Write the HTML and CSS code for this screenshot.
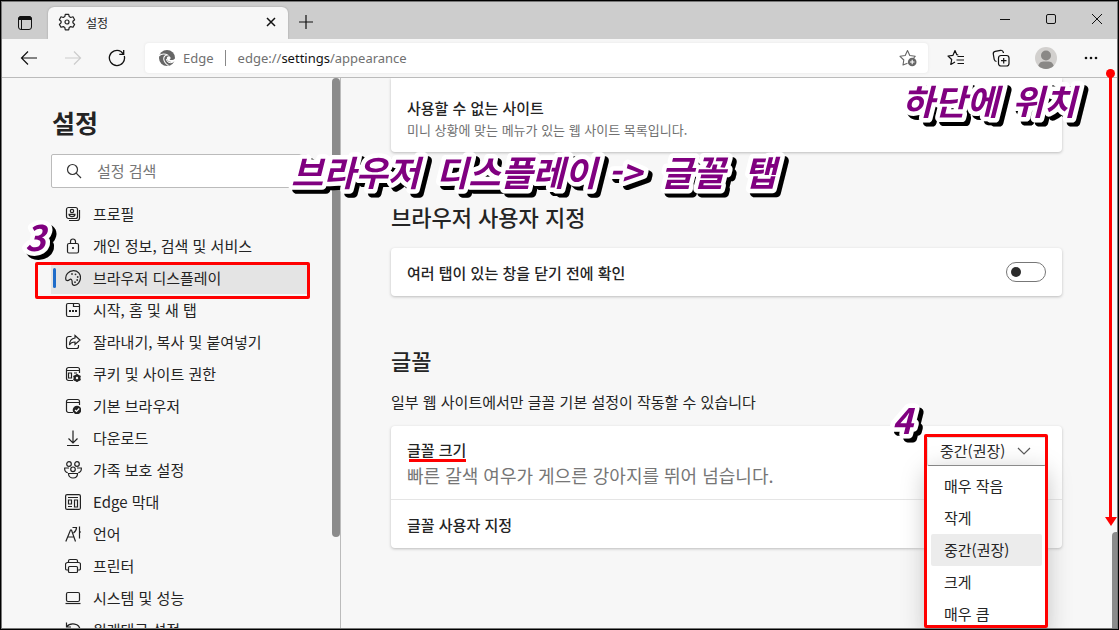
FILE: index.html
```html
<!DOCTYPE html>
<html lang="ko">
<head>
<meta charset="utf-8">
<title>설정</title>
<meta name="viewport" content="width=device-width, initial-scale=1">
<link rel="stylesheet" href="styles.css">
</head>
<body>
<div class="window">
  <header class="titlebar">
    <button class="tab-actions" aria-label="탭 작업 메뉴">
      <svg width="16" height="16" viewBox="0 0 16 16" fill="none" stroke="#111"><rect x="1.5" y="1.5" width="13" height="13" rx="2.5"/><path d="M4.5 5v9.5"/><path d="M1.5 4.5v-.5a2.5 2.5 0 0 1 2.500-2.500h8a2.500 2.500 0 0 1 2.500 2.500v.500z" fill="#111"/></svg>
    </button>
    <div class="tab">
      <svg width="18" height="18" viewBox="0 0 18 18" fill="none" stroke="#222" stroke-width="1.200" stroke-linejoin="round"><path d="M7.300 1.300h3.400l.5 2.300 1.500.9 2.300-.7 1.600 2.900-1.700 1.600v1.500l1.700 1.600-1.600 2.900-2.300-.7-1.500.9-.5 2.300H7.300l-.5-2.300-1.500-.9-2.300.7-1.600-2.900 1.700-1.600V8.300L1.400 6.700 3 3.800l2.300.7 1.500-.9z"/><circle cx="9" cy="9" r="2"/></svg>
      <span class="tab-name">설정</span>
      <button class="tab-close" aria-label="탭 닫기"><svg width="10" height="10" viewBox="0 0 10 10" stroke="#111" stroke-width="1.500"><path d="M1 1l8 8M9 1L1 9"/></svg></button>
    </div>
    <button class="new-tab" aria-label="새 탭"><svg width="16" height="16" viewBox="0 0 16 16" stroke="#111" stroke-width="1.200"><path d="M8 1v14M1 8h14"/></svg></button>
    <div class="controls">
      <button aria-label="최소화"><svg width="12" height="12" viewBox="0 0 12 12" stroke="#111"><path d="M1 6.500h10"/></svg></button>
      <button aria-label="최대화"><svg width="12" height="12" viewBox="0 0 12 12" fill="none" stroke="#111"><rect x="1.500" y="1.500" width="9" height="9" rx="1.500"/></svg></button>
      <button aria-label="닫기"><svg width="12" height="12" viewBox="0 0 12 12" stroke="#111"><path d="M1 1l10 10M11 1L1 11"/></svg></button>
    </div>
  </header>

  <div class="toolbar">
    <button class="tool" aria-label="뒤로"><svg width="18" height="16" viewBox="0 0 18 16" fill="none" stroke="#111" stroke-width="1.200"><path d="M17 8H1.500M8 1.500L1.500 8 8 14.500"/></svg></button>
    <button class="tool" aria-label="앞으로" disabled><svg width="18" height="16" viewBox="0 0 18 16" fill="none" stroke="#ccc" stroke-width="1.200"><path d="M1 8h15.500M10 1.500L16.500 8 10 14.500"/></svg></button>
    <button class="tool" aria-label="새로 고침"><svg width="18" height="18" viewBox="0 0 18 18" fill="none" stroke="#111" stroke-width="1.300"><path d="M16.300 7A7.600 7.600 0 1 1 13 2.500L15.500 5M15.700 1v4.300h-4.400"/></svg></button>
    <div class="address">
      <svg width="16" height="16" viewBox="0 0 16 16"><circle cx="8" cy="8" r="8" fill="#666"/><path d="M0 5.800C2.500 3.300 6.500 3.600 8.500 5c-2.800.2-4 2-3.700 4.500.4 2.600 2.300 4.600 4.700 6M13.800 12.300c-3 1.100-6 0-6.300-3.300" fill="none" stroke="#fff" stroke-width="1.100"/><path d="M8.300 9.800c-1.400-2.200.6-4.300 2.400-3.300 1.600 1 .8 2.600-.3 3.200 1.600.8 4.400.5 5.600-1.200l.5 2.300c-2.300 1.700-6.600 1.900-8.200-1z" fill="#fff"/></svg>
      <span class="brand">Edge</span>
      <span class="divider"></span>
      <label class="url" for="address">edge://<b>settings</b>/appearance</label>
      <input id="address" class="address-input" aria-label="주소">
      <button class="star" aria-label="즐겨찾기에 추가"><svg width="18" height="18" viewBox="0 0 18 18" fill="none" stroke="#666" stroke-width="1.100" stroke-linejoin="round"><path d="M8.500 14.200L4 16l.8-5L1 7.300l5.200-.8L8.500 1.500l2.300 5 5.400.8-1.500 1.500"/><circle cx="13.200" cy="13" r="4.300" fill="#666" stroke="none"/><path d="M13.200 10.700v4.600M10.900 13h4.600" stroke="#fff"/></svg></button>
    </div>
    <button class="tool wide" aria-label="즐겨찾기"><svg width="18" height="18" viewBox="0 0 18 18" fill="none" stroke="#111" stroke-width="1.200" stroke-linejoin="round"><path d="M11.300 6L9.800 5.700 8 1.500 6 6.300l-5 .7 3.700 3.500L3.800 15.500 8 13"/><path d="M10.500 7.500H17M9.500 11H17M10.500 14.500H17"/></svg></button>
    <button class="tool wide" aria-label="컬렉션"><svg width="18" height="18" viewBox="0 0 18 18" fill="none" stroke="#111" stroke-width="1.200"><rect x="6.500" y="6.500" width="10.500" height="10.500" rx="2.500"/><path d="M11.700 9v5.500M9 11.700h5.500M4.500 12.500c-1.500-.2-2-1-2.300-2.200L1.300 5.200C1 3.500 1.700 2.600 3.200 2.300L8.500 1.300c1.700-.3 2.500.4 2.900 2.200v.5"/></svg></button>
    <button class="tool wide" aria-label="프로필"><svg width="22" height="22" viewBox="0 0 22 22"><circle cx="11" cy="11" r="11" fill="#d2d0ce"/><circle cx="11" cy="8.500" r="5" fill="#8a8886"/><path d="M3.300 18.800C4.500 14.300 8 14.500 11 14.500s6.500-.2 7.700 4.300A11 11 0 0 1 3.300 18.800z" fill="#8a8886"/></svg></button>
    <button class="tool wide" aria-label="설정 및 기타"><svg width="14" height="4" viewBox="0 0 14 4" fill="#111"><circle cx="2" cy="2" r="1.300"/><circle cx="7" cy="2" r="1.300"/><circle cx="12" cy="2" r="1.300"/></svg></button>
  </div>

  <div class="page">
    <aside class="sidebar">
      <h1>설정</h1>
      <div class="search">
        <svg width="16" height="16" viewBox="0 0 16 16" fill="none" stroke="#333" stroke-width="1.200"><circle cx="6.500" cy="6.500" r="5"/><path d="M10.200 10.200l4.800 4.800"/></svg>
        <input type="search" placeholder="설정 검색" aria-label="설정 검색">
      </div>
      <nav>
        <a href="#profile"><svg class="icon" viewBox="0 0 16 16"><rect x="1.500" y="1.500" width="11" height="11" rx="2"/><circle cx="7" cy="5" r="1.700"/><path d="M4 8.300h6c0 3-6 3-6 0zM14.500 4v8a2.500 2.500 0 0 1-2.500 2.500H4"/></svg><span>프로필</span></a>
        <a href="#privacy"><svg class="icon" viewBox="0 0 16 16"><rect x="2.500" y="5.500" width="11" height="9.500" rx="1.500"/><path d="M5.500 5.500V3.500a2.500 2.500 0 0 1 5 0v2"/><circle cx="8" cy="10" r=".5"/></svg><span>개인 정보, 검색 및 서비스</span></a>
        <a href="#appearance" class="current" aria-current="page"><svg class="icon" viewBox="0 0 16 16"><path d="M1 10C-.5 5 4 .7 8.500.7c4.500 0 7.200 3.300 7 7.200-.2 4-3 7.500-6.200 7.400C5.500 15 8.300 11.500 6.500 9.600 4.700 7.800 4 12.200 1 10z"/><g fill="#333" stroke="none"><circle cx="7" cy="4" r=".9"/><circle cx="10.500" cy="4.300" r=".9"/><circle cx="12.700" cy="7" r=".9"/><circle cx="12.200" cy="10" r=".9"/><circle cx="10" cy="12.200" r=".9"/></g></svg><span>브라우저 디스플레이</span></a>
        <a href="#start"><svg class="icon" viewBox="0 0 16 16"><rect x="1.500" y="1.500" width="13" height="13" rx="1.500"/><path d="M8.500 1.500v3h6"/><path d="M4 9h2M7 9h2M10 9h2" stroke-width="1.800"/></svg><span>시작, 홈 및 새 탭</span></a>
        <a href="#share"><svg class="icon" viewBox="0 0 16 16"><path d="M6.500 2.500h-3a2 2 0 0 0-2 2v8a2 2 0 0 0 2 2h8a2 2 0 0 0 2-2V11M10 1.500l5 4.500-5 4.500V8C7 8 5.500 9 4.500 11c0-4 2-6.500 5.500-7z"/></svg><span>잘라내기, 복사 및 붙여넣기</span></a>
        <a href="#cookies"><svg class="icon" viewBox="0 0 16 16"><path d="M8 14.500H3.500a2 2 0 0 1-2-2v-9a2 2 0 0 1 2-2h9a2 2 0 0 1 2 2V7M1.500 4.500h13M3.500 7h3v5h-3zM9 7h3"/><circle cx="12" cy="12" r="2.500" stroke-width="2"/><path d="M12 8v8M8.500 10l7 4M15.500 10l-7 4" stroke-width="1.500"/><circle cx="12" cy="12" r="1.200" fill="#f7f7f7" stroke="none"/></svg><span>쿠키 및 사이트 권한</span></a>
        <a href="#default"><svg class="icon" viewBox="0 0 16 16"><path d="M8 14.500H3.500a2 2 0 0 1-2-2v-9a2 2 0 0 1 2-2h9a2 2 0 0 1 2 2V7M1.500 4.500h13"/><circle cx="12" cy="12" r="4.300" fill="#222" stroke="none"/><path d="M10 12l1.500 1.500 2.700-3" stroke="#fff"/></svg><span>기본 브라우저</span></a>
        <a href="#downloads"><svg class="icon" viewBox="0 0 16 16"><path d="M8 .5v12M3.500 8.500L8 13l4.500-4.500M2 15.500h12"/></svg><span>다운로드</span></a>
        <a href="#family"><svg class="icon large" viewBox="0 0 18 18"><circle cx="5" cy="3" r="2.300"/><circle cx="13" cy="3" r="2.300"/><circle cx="9" cy="8.300" r="2.300"/><path d="M4.500 12.500h9c0 6-9 6-9 0zM5 7H.700c-.3 2.500 1 4.500 3 4.700M13 7h4.300c.3 2.500-1 4.500-3 4.700"/></svg><span>가족 보호 설정</span></a>
        <a href="#bar"><svg class="icon" viewBox="0 0 16 16"><rect x=".600" y=".600" width="14.800" height="14.800" rx="1.500"/><path d="M3 3.500h10M3.500 6h3v4h-3zM9.500 6h3v7h-3zM3 12.500h4"/></svg><span>Edge 막대</span></a>
        <a href="#language"><svg class="icon" viewBox="0 0 16 16"><path d="M.800 15.500L5.500 4h1l4 11.500M2.500 11h6.300M7.500 1.500h4c0 3-1 4-3 5.500M14.500.500v12M14.500 6H16"/></svg><span>언어</span></a>
        <a href="#printer"><svg class="icon" viewBox="0 0 16 16"><path d="M3.500 4V3a1.500 1.500 0 0 1 1.500-1.500h6A1.500 1.500 0 0 1 12.500 3v1M3.500 12H2a1.500 1.500 0 0 1-1.500-1.500V6.500a2 2 0 0 1 2-2h11a2 2 0 0 1 2 2v4A1.500 1.500 0 0 1 14 12h-1.500"/><rect x="3.500" y="8.500" width="9" height="6" rx="1"/></svg><span>프린터</span></a>
        <a href="#system"><svg class="icon" viewBox="0 0 16 16"><rect x="1.500" y="2.500" width="13" height="9" rx="1.500"/><path d="M.5 13.500h15"/></svg><span>시스템 및 성능</span></a>
        <a href="#reset"><svg class="icon" viewBox="0 0 16 16"><path d="M1.500.500v4.500h4.500M1.500 5C5 .500 15 .500 15 8.500c0 4-3 6-6 6"/></svg><span>원래대로 설정</span></a>
      </nav>
      <div class="side-thumb"></div>
    </aside>

    <main>
      <section class="card sites">
        <h3>사용할 수 없는 사이트</h3>
        <p>미니 상황에 맞는 메뉴가 있는 웹 사이트 목록입니다.</p>
      </section>
      <h2>브라우저 사용자 지정</h2>
      <section class="card">
        <div class="row">
          <label for="confirm">여러 탭이 있는 창을 닫기 전에 확인</label>
          <input id="confirm" class="switch" type="checkbox" role="switch">
        </div>
      </section>
      <h2>글꼴</h2>
      <p class="intro">일부 웹 사이트에서만 글꼴 기본 설정이 작동할 수 있습니다</p>
      <section class="card">
        <div class="row size-row">
          <div>
            <label class="underlined" for="size">글꼴 크기</label>
            <p class="sample">빠른 갈색 여우가 게으른 강아지를 뛰어 넘습니다.</p>
          </div>
          <div class="picker">
            <select id="size"><option>매우 작음</option><option>작게</option><option selected>중간(권장)</option><option>크게</option><option>매우 큼</option></select>
            <svg class="chevron" width="14" height="8" viewBox="0 0 14 8" fill="none" stroke="#555" stroke-width="1.200"><path d="M1 1l6 6 6-6"/></svg>
            <ul class="menu" role="listbox" aria-label="글꼴 크기">
              <li role="option">매우 작음</li>
              <li role="option">작게</li>
              <li role="option" class="chosen" aria-selected="true">중간(권장)</li>
              <li role="option">크게</li>
              <li role="option">매우 큼</li>
            </ul>
            <div class="picker-frame"></div>
          </div>
        </div>
        <div class="row">
          <span>글꼴 사용자 지정</span>
        </div>
      </section>
      <div class="main-thumb"></div>
    </main>
  </div>

  <svg class="note note-three" width="50" height="60"><text x="12" y="42">3</text></svg>
  <svg class="note note-four" width="50" height="60"><text x="12" y="42">4</text></svg>
  <svg class="note note-path" width="520" height="60"><text y="42"><tspan x="12">브라우저</tspan><tspan x="157">디스플레이</tspan><tspan x="329">-&gt;</tspan><tspan x="382">글꼴</tspan><tspan x="465">탭</tspan></text></svg>
  <svg class="note note-below" width="210" height="60"><text y="42"><tspan x="12">하단에</tspan><tspan x="122">위치</tspan></text></svg>
  <div class="arrow"></div>
</div>
</body>
</html>
```
FILE: styles.css
```css
* { box-sizing: border-box; }
body, h1, h2, h3, p, ul { margin: 0; padding: 0; }
body {
  font-family: "Noto Sans CJK KR", sans-serif;
  font-size: 15px;
  color: #242424;
  background: #f7f7f7;
}
button { border: 0; padding: 0; background: none; display: flex; align-items: center; justify-content: center; }
svg { flex: none; }
input, select { font: inherit; color: inherit; }

.window { position: relative; height: 100vh; display: flex; flex-direction: column; overflow: hidden; }
.window::after {
  content: "";
  position: absolute;
  inset: 0;
  border: 1px solid #000;
  box-shadow: inset 0 0 0 1px #777;
  pointer-events: none;
}

.titlebar { flex: none; display: flex; height: 39px; padding-top: 7px; background: #cdcdcd; }
.tab-actions { width: 48px; padding-left: 2px; }
.tab { display: flex; align-items: center; gap: 10px; width: 240px; padding: 0 10px 2px 10px; border-radius: 6px 6px 0 0; background: #f7f7f7; box-shadow: 0 0 2px #999; font-size: 12px; }
.tab-name { flex: 1; }
.tab-close { width: 14px; height: 20px; }
.new-tab { width: 35px; height: 30px; }
.controls { display: flex; margin-left: auto; }
.controls button { width: 46px; height: 24px; padding-left: 2px; }

.toolbar { flex: none; position: relative; display: flex; align-items: center; height: 39px; padding: 0 6px 0 7px; border-bottom: 1px solid #bbb; background: #f7f7f7; }
.tool { width: 44px; height: 30px; }
.tool.wide { width: 45px; }
.address {
  flex: 1;
  display: flex;
  align-items: center;
  height: 30px;
  margin: 0 5px 0 6px;
  padding: 0 11px 0 14px;
  border-radius: 4px;
  background: #fff;
  box-shadow: 0 0 3px #e4e4e4;
  font-family: "Noto Sans", sans-serif;
  font-size: 13px;
  color: #707070;
}
.brand { margin-left: 8px; }
.divider { width: 1px; height: 16px; margin: 0 12px 0 11px; background: #888; }
.url b { font-weight: 400; color: #111; }
.address-input { flex: 1; min-width: 0; border: 0; background: none; outline: 0; }

.page { flex: 1; display: flex; min-height: 0; }
.sidebar { position: relative; flex: none; width: 341px; padding: 26px 32px 0 51px; border-right: 1px solid #bbb; overflow: hidden; }
h1 { margin-bottom: 14px; padding-left: 1px; font-size: 25px; line-height: 36px; font-weight: 700; }
.search { display: flex; align-items: center; gap: 15px; height: 34px; margin-bottom: 10px; padding: 0 14px; border: 1px solid #bbb; border-radius: 2px; background: #fff; }
.search input { flex: 1; min-width: 0; border: 0; padding: 0 0 2px; background: none; outline: 0; }
.search input::placeholder { color: #767676; opacity: 1; }
nav a { position: relative; display: flex; align-items: center; gap: 12px; height: 32px; padding-left: 14px; color: inherit; text-decoration: none; white-space: nowrap; }
nav span { padding-bottom: 2px; }
.icon { width: 16px; height: 16px; fill: none; stroke: #222; stroke-width: 1.2; }
.icon.large { width: 18px; height: 18px; margin: 0 -1px; }
.current { background: #e4e4e4; }
.current::before { content: ""; position: absolute; left: 2px; top: 6px; width: 3px; height: 20px; border-radius: 2px; background: #1f6cc9; }
.current::after { content: ""; position: absolute; inset: 0 -2px -5px -16px; border: 3px solid #f00; border-radius: 2px; }
.side-thumb { position: absolute; top: 0; right: 0; width: 8px; height: 459px; border-radius: 4px; background: #8b8b8b; }

main { position: relative; flex: 1; min-width: 0; padding: 0 57px 0 50px; overflow: hidden; }
.card { border-radius: 4px; background: #fff; box-shadow: 0 1px 3px #bbb; }
.sites { padding: 18px 16px 12px; border-radius: 0 0 4px 4px; }
h3 { font-size: 15px; line-height: 24px; font-weight: 500; }
.sites p { font-size: 13px; line-height: 20px; color: #707070; }
h2 { margin-top: 50px; font-size: 22px; line-height: 28px; font-weight: 500; -webkit-text-stroke: 0; }
h2 + .card { margin-top: 18px; }
.intro { margin: 16px 0 12px; line-height: 24px; }
.row { display: flex; align-items: center; justify-content: space-between; min-height: 48px; padding: 0 16px; font-weight: 500; }
.size-row { align-items: flex-start; padding-top: 11px; padding-bottom: 12px; border-bottom: 1px solid #e5e5e5; }
.underlined { position: relative; display: block; width: max-content; line-height: 26px; }
.underlined::after { content: ""; position: absolute; left: 2px; right: 0; bottom: 1px; height: 3px; background: #f00; }
.sample { font-size: 18px; line-height: 24px; font-weight: 400; color: #767676; }
.switch { appearance: none; width: 40px; height: 20px; margin: 0; padding: 4px; border: 1px solid #777; border-radius: 10px; background: #fff; }
.switch::before { content: ""; display: block; width: 10px; height: 10px; border-radius: 50%; background: #2b2b2b; }

.picker { position: relative; width: 119px; font-weight: 400; }
select { appearance: none; display: block; width: 100%; height: 29px; padding: 0 12px 2px; border: 1px solid #ddd; border-bottom-color: #777; border-radius: 2px; background: #fff; }
.chevron { position: absolute; right: 15px; top: 10px; }
.menu { position: absolute; top: 29px; left: 0; width: 100%; padding: 4px; background: #fff; box-shadow: 0 6px 24px #bbb; list-style: none; }
.menu li { height: 32px; padding: 0 13px; border-radius: 2px; line-height: 32px; }
.menu .chosen { background: #ececec; }
.picker-frame { position: absolute; top: -3px; left: -3px; right: -2px; height: 194px; border: 3px solid #f00; border-radius: 2px; }
.main-thumb { position: absolute; top: 454px; bottom: 0; right: 2px; width: 5px; border-radius: 4px 0 0 0; background: #8b8b8b; }

.note { position: absolute; overflow: visible; filter: drop-shadow(4px 4px 0 #000); }
.note text {
  font-size: 35px;
  font-weight: 700;
  font-style: italic;
  fill: #800080;
  stroke: #fff;
  stroke-width: 9px;
  stroke-linejoin: round;
  paint-order: stroke;
}
.note-three { left: 13px; top: 209px; }
.note-four { left: 880px; top: 392px; }
.note-path { left: 279px; top: 144px; }
.note-below { right: 19px; top: 73px; }
.arrow { position: absolute; right: 7px; top: 73px; width: 3px; height: 445px; background: #f00; }
.arrow::before { content: ""; position: absolute; left: -3px; top: -4px; width: 9px; height: 9px; border-radius: 50%; background: #f00; }
.arrow::after { content: ""; position: absolute; left: -4px; bottom: -8px; border: solid transparent; border-width: 9px 6px 0; border-top-color: #f00; }
```
